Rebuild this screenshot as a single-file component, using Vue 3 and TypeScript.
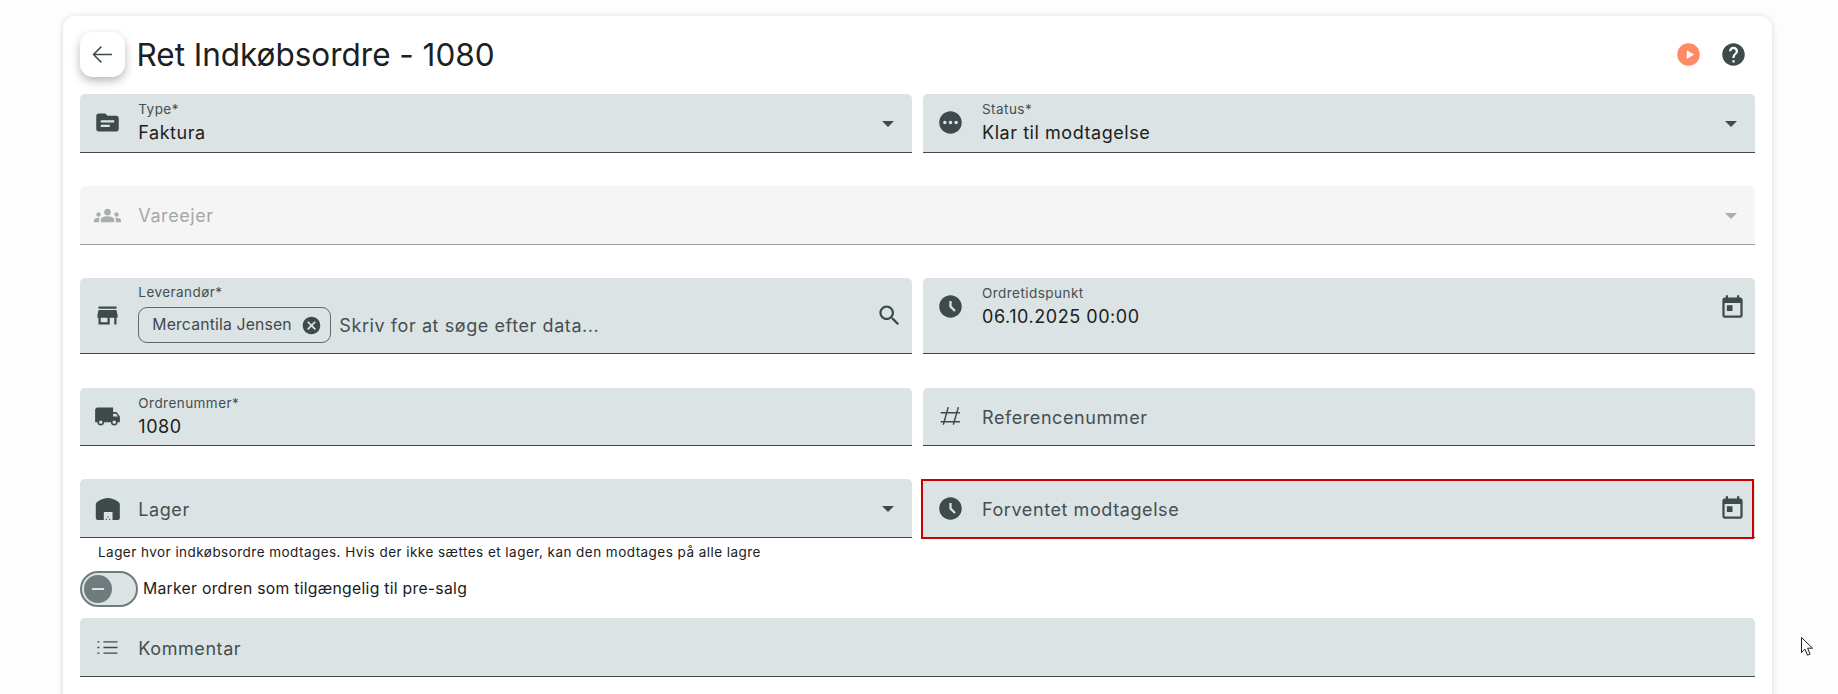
<script setup lang="ts">
const icons: Record<string, string> = {
  topic: 'M20 6h-8l-2-2H4c-1.1 0-1.99.9-1.99 2L2 18c0 1.1.9 2 2 2h16c1.1 0 2-.9 2-2V8c0-1.1-.9-2-2-2zm-6 10H6v-2h8v2zm4-4H6v-2h12v2z',
  pending: 'M12 2C6.48 2 2 6.48 2 12s4.48 10 10 10 10-4.48 10-10S17.52 2 12 2zM7 13.5c-.83 0-1.5-.67-1.5-1.5s.67-1.5 1.5-1.5 1.5.67 1.5 1.5-.67 1.5-1.5 1.5zm5 0c-.83 0-1.5-.67-1.5-1.5s.67-1.5 1.5-1.5 1.5.67 1.5 1.5-.67 1.5-1.5 1.5zm5 0c-.83 0-1.5-.67-1.5-1.5s.67-1.5 1.5-1.5 1.5.67 1.5 1.5-.67 1.5-1.5 1.5z',
  groups: 'M12 12.75c1.63 0 3.07.39 4.24.9 1.08.48 1.76 1.56 1.76 2.73V18H6v-1.61c0-1.18.68-2.26 1.76-2.73 1.17-.52 2.61-.91 4.24-.91zM4 13c1.1 0 2-.9 2-2s-.9-2-2-2-2 .9-2 2 .9 2 2 2zm1.13 1.1c-.37-.06-.74-.1-1.13-.1-.99 0-1.93.21-2.78.58C.48 14.9 0 15.62 0 16.43V18h4.5v-1.61c0-.83.23-1.61.63-2.29zM20 13c1.1 0 2-.9 2-2s-.9-2-2-2-2 .9-2 2 .9 2 2 2zm4 3.43c0-.81-.48-1.53-1.22-1.85-.85-.37-1.79-.58-2.78-.58-.39 0-.76.04-1.13.1.4.68.63 1.46.63 2.29V18H24v-1.57zM12 6c1.66 0 3 1.34 3 3s-1.34 3-3 3-3-1.34-3-3 1.34-3 3-3z',
  store: 'M20 4H4v2h16V4zm1 10v-2l-1-5H4l-1 5v2h1v6h10v-6h4v6h2v-6h1zm-9 4H6v-4h6v4z',
  truck: 'M20 8h-3V4H3c-1.1 0-2 .9-2 2v11h2c0 1.66 1.34 3 3 3s3-1.34 3-3h6c0 1.66 1.34 3 3 3s3-1.34 3-3h2v-5l-3-4zM6 18.5c-.83 0-1.5-.67-1.5-1.5s.67-1.5 1.5-1.5 1.5.67 1.5 1.5-.67 1.5-1.5 1.5zm13.5-9l1.96 2.5H17V9.5h2.5zm-1.5 9c-.83 0-1.5-.67-1.5-1.5s.67-1.5 1.5-1.5 1.5.67 1.5 1.5-.67 1.5-1.5 1.5z',
  clock: 'M11.99 2C6.47 2 2 6.48 2 12s4.47 10 9.99 10C17.52 22 22 17.52 22 12S17.52 2 11.99 2zm3.3 14.71L11 12.41V7h2v4.59l3.71 3.71-1.42 1.41z',
  today: 'M19 3h-1V1h-2v2H8V1H6v2H5c-1.11 0-1.99.9-1.99 2L3 19c0 1.1.89 2 2 2h14c1.1 0 2-.9 2-2V5c0-1.1-.9-2-2-2zm0 16H5V8h14v11zM7 10h5v5H7z',
  cancel: 'M12 2C6.47 2 2 6.47 2 12s4.47 10 10 10 10-4.47 10-10S17.53 2 12 2zm5 13.59L15.59 17 12 13.41 8.41 17 7 15.59 10.59 12 7 8.41 8.41 7 12 10.59 15.59 7 17 8.41 13.41 12 17 15.59z',
  search: 'M15.5 14h-.79l-.28-.27C15.41 12.59 16 11.11 16 9.5 16 5.91 13.09 3 9.5 3S3 5.91 3 9.5 5.91 16 9.5 16c1.61 0 3.09-.59 4.23-1.57l.27.28v.79l5 4.99L20.49 19l-4.99-5zm-6 0C7.01 14 5 11.99 5 9.5S7.01 5 9.5 5 14 7.01 14 9.5 11.99 14 9.5 14z',
  help: 'M12 2C6.48 2 2 6.48 2 12s4.48 10 10 10 10-4.48 10-10S17.52 2 12 2zm1 17h-2v-2h2v2zm2.07-7.75l-.9.92C13.45 12.9 13 13.5 13 15h-2v-.5c0-1.1.45-2.1 1.17-2.83l1.24-1.26c.37-.36.59-.86.59-1.41 0-1.1-.9-2-2-2s-2 .9-2 2H8c0-2.21 1.79-4 4-4s4 1.79 4 4c0 .88-.36 1.68-.93 2.25z',
  warehouse: 'M12 1c3 0 7 1.600 10 3.400 1.300.8 2 1.700 2 3.100V21c0 1.300-.9 2-2 2h-5.300v-8H8v8H2c-1.100 0-2-.7-2-2V7.500c0-1.400.7-2.300 2-3.100C5 2.600 9 1 12 1zM11.700 19.200h1.100v1.200h-1.100zM13.400 21.700h1.100V23h-1.100zM10 21.700h1.100V23H10z',
}
</script>

<template>
  <div class="page">
    <main class="card">
      <header class="head">
        <button class="back" type="button" aria-label="Tilbage">
          <svg class="arrow" viewBox="0 0 24 24"><path d="M20.500 12H4M11 5l-7 7 7 7" /></svg>
        </button>
        <h1 class="title">Ret Indkøbsordre - 1080</h1>
        <svg class="icon play" viewBox="0 0 24 24"><circle cx="12" cy="12" r="10" fill="#ff8a65" /><path d="M10.500 8.200v7.800l6.500-3.900z" fill="#fff" /></svg>
        <svg class="icon help" viewBox="0 0 24 24"><path :d="icons.help" /></svg>
      </header>

      <section class="form">
        <div class="row">
          <div class="field top">
            <svg class="icon" viewBox="0 0 24 24"><path :d="icons.topic" /></svg>
            <div class="content">
              <span class="label">Type*</span>
              <span class="value">Faktura</span>
            </div>
            <i class="caret" />
          </div>
          <div class="field top">
            <svg class="icon" viewBox="0 0 24 24"><path :d="icons.pending" /></svg>
            <div class="content">
              <span class="label">Status*</span>
              <span class="value">Klar til modtagelse</span>
            </div>
            <i class="caret" />
          </div>
        </div>

        <div class="field mid disabled">
          <svg class="icon" viewBox="0 0 24 24"><path :d="icons.groups" /></svg>
          <div class="content"><span class="ph">Vareejer</span></div>
          <i class="caret" />
        </div>

        <div class="row tall">
          <div class="field mid">
            <svg class="icon" viewBox="0 0 24 24"><path :d="icons.store" /></svg>
            <div class="content supplier">
              <span class="label">Leverandør*</span>
              <div class="chipline">
                <span class="chip">
                  Mercantila Jensen
                  <svg class="chip-x" viewBox="0 0 24 24"><path :d="icons.cancel" /></svg>
                </span>
                <span class="ph">Skriv for at søge efter data...</span>
              </div>
            </div>
            <svg class="icon lens" viewBox="0 0 24 24"><path :d="icons.search" /></svg>
          </div>
          <div class="field top">
            <svg class="icon" viewBox="0 0 24 24"><path :d="icons.clock" /></svg>
            <div class="content">
              <span class="label">Ordretidspunkt</span>
              <span class="value">06.10.2025 00:00</span>
            </div>
            <svg class="icon cal" viewBox="0 0 24 24"><path :d="icons.today" /></svg>
          </div>
        </div>

        <div class="row short">
          <div class="field top">
            <svg class="icon" viewBox="0 0 24 24"><path :d="icons.truck" /></svg>
            <div class="content">
              <span class="label">Ordrenummer*</span>
              <span class="value">1080</span>
            </div>
          </div>
          <div class="field mid">
            <svg class="glyph hash" viewBox="0 0 24 24"><path d="M3.300 8.700h17.100M3.300 16.700h17.100M10 3.700 5.600 19.300M19 3.700l-4.500 15.600" /></svg>
            <div class="content low"><span class="ph">Referencenummer</span></div>
          </div>
        </div>

        <div class="row last">
          <div class="field mid">
            <svg class="icon" viewBox="0 0 24 24"><path transform="translate(1.600 1.800) scale(.89)" fill-rule="evenodd" :d="icons.warehouse" /></svg>
            <div class="content low"><span class="ph">Lager</span></div>
            <i class="caret" />
          </div>
          <div class="field mid">
            <svg class="icon" viewBox="0 0 24 24"><path :d="icons.clock" /></svg>
            <div class="content low"><span class="ph">Forventet modtagelse</span></div>
            <svg class="icon cal up" viewBox="0 0 24 24"><path :d="icons.today" /></svg>
            <span class="marker" />
          </div>
        </div>
      </section>

      <p class="hint">Lager hvor indkøbsordre modtages. Hvis der ikke sættes et lager, kan den modtages på alle lagre</p>

      <div class="switch">
        <span class="track"><span class="thumb"><b class="minus" /></span></span>
        <span class="switch-label">Marker ordren som tilgængelig til pre-salg</span>
      </div>

      <div class="field mid comment">
        <svg class="glyph" viewBox="0 0 24 24"><path d="M8.400 7h12.500M8.400 12h12.500M8.400 17h12.500M3 7h1.800M3 12h1.800M3 17h1.800" /></svg>
        <div class="content low"><span class="ph">Kommentar</span></div>
      </div>
    </main>

    <svg class="cursor" viewBox="0 0 12 19"><path d="M.5.500v15l3.500-3.300 2.500 6 2.600-1.100-2.500-5.900h4.900z" /></svg>
  </div>
</template>

<style>
html, body { margin: 0; background: #fdfdfd; }
</style>

<style scoped>
.page {
  position: relative;
  height: 694px;
  overflow: hidden;
  padding: 16px 66px 0 63px;
  box-sizing: border-box;
  font-family: Inter, "Liberation Sans", sans-serif;
  color: #1b2021;
}
.card {
  background: #fff;
  border-radius: 12px;
  box-shadow: 0 1px 6px rgba(0, 0, 0, .16);
  padding: 16px 17px 40px;
  height: 760px;
  box-sizing: border-box;
}
.head { display: flex; align-items: center; height: 45px; margin-bottom: 17px; }
.back {
  width: 45px; height: 45px; padding: 0; border: 0; border-radius: 13px;
  background: #fff; box-shadow: 0 4px 10px rgba(0, 0, 0, .28);
  display: flex; align-items: center; justify-content: center;
}
.arrow { width: 27px; height: 27px; fill: none; stroke: #3f4a4c; stroke-width: 1.300; }
.title { margin: 0 0 0 11.500px; font-size: 31.500px; font-weight: 400; line-height: 46px; flex: 1; letter-spacing: -.02px; }
.help { margin: 0 8.500px 0 18px; }

.form { display: flex; flex-direction: column; gap: 33px; }
.row { display: grid; grid-template-columns: 832px 832px; gap: 11px; height: 59px; }
.row.tall { height: 76px; margin-bottom: 1px; }
.row.short { height: 58px; }
.field {
  position: relative;
  display: flex;
  box-sizing: border-box;
  height: 59px;
  padding: 0 14px;
  background: #dbe3e4;
  border-radius: 5px 5px 0 0;
  border-bottom: 1px solid #3f4a4c;
}
.row .field { height: 100%; }
.field.top { align-items: flex-start; }
.field.mid { align-items: center; }
.field.disabled { background: #f5f5f5; border-bottom-color: #9a9fa0; }
.disabled .icon { fill: #a9adae; }
.disabled .ph { color: #a4a8a9; }
.disabled .caret { border-top-color: #a9adae; }
.icon { width: 27px; height: 27px; flex: none; fill: #3f4a4c; display: block; }
.glyph { width: 27px; height: 27px; flex: none; fill: none; stroke: #3f4a4c; stroke-width: 1.300; }
.top > .icon:first-child { margin-top: 15px; }
.content { flex: 1; min-width: 0; margin-left: 17.300px; display: flex; flex-direction: column; align-items: flex-start; }
.row .field:nth-child(2) .content { margin-left: 18px; }
.content.low { padding-top: 2px; }
.top .content { padding-top: 6px; }
.label { font-size: 13.500px; line-height: 18px; letter-spacing: .45px; color: #454f51; }
.value { margin-top: .500px; font-size: 18px; line-height: 27px; letter-spacing: .55px; color: #1b2021; }
.ph { font-size: 18px; line-height: 27px; letter-spacing: .58px; color: #454f51; }
.caret {
  flex: none; width: 0; height: 0; margin-right: 4px;
  border-left: 6px solid transparent; border-right: 6px solid transparent;
  border-top: 6px solid #3f4a4c;
}
.top .caret { margin-top: 27px; }
.mid .caret { margin-top: 1px; }

.supplier { align-self: flex-start; padding-top: 5px; }
.chipline { display: flex; align-items: center; gap: 8px; margin-top: 6px; }
.chip {
  display: flex; align-items: center; box-sizing: border-box;
  width: 193px; height: 36px; padding: 0 8.500px 2px 13px;
  border: 1px solid #5f6a6c; border-radius: 9px;
  font-size: 15.750px; letter-spacing: .16px; color: #3f4a4c; white-space: nowrap;
}
.chip-x { width: 21px; height: 21px; margin: 2px 0 0 auto; fill: #3f4a4c; flex: none; }
.lens { margin-right: -4.500px; }
.cal { margin: 16px -4.500px 0 0; }
.cal.up { margin-top: 0; }
.marker {
  position: absolute; left: -2px; top: 0; right: 1px; bottom: -2px;
  border: 2px solid #cc0000; pointer-events: none;
}

.hint {
  margin: 5px 0 0 18px; height: 18px;
  font-size: 13.500px; line-height: 18px; letter-spacing: .46px; color: #1b2021;
}
.switch { display: flex; align-items: center; height: 36px; margin-top: 10px; }
.track {
  display: flex; align-items: center; box-sizing: border-box;
  width: 58px; height: 36px; padding-left: 2px;
  border: 2px solid #6f7b7d; border-radius: 18px; background: #dbe3e4;
}
.thumb {
  width: 28px; height: 28px; border-radius: 50%; background: #6f7b7d;
  display: flex; align-items: center; justify-content: center;
}
.minus { width: 12px; height: 2px; background: #dbe3e4; }
.switch-label { margin-left: 5px; margin-top: -1px; font-size: 15.750px; letter-spacing: .27px; color: #1b2021; }

.comment { margin-top: 11px; }

.cursor {
  position: absolute; left: 1801px; top: 637px;
  width: 12px; height: 19px; fill: #fff; stroke: #1b2021; stroke-width: 1;
}
</style>
